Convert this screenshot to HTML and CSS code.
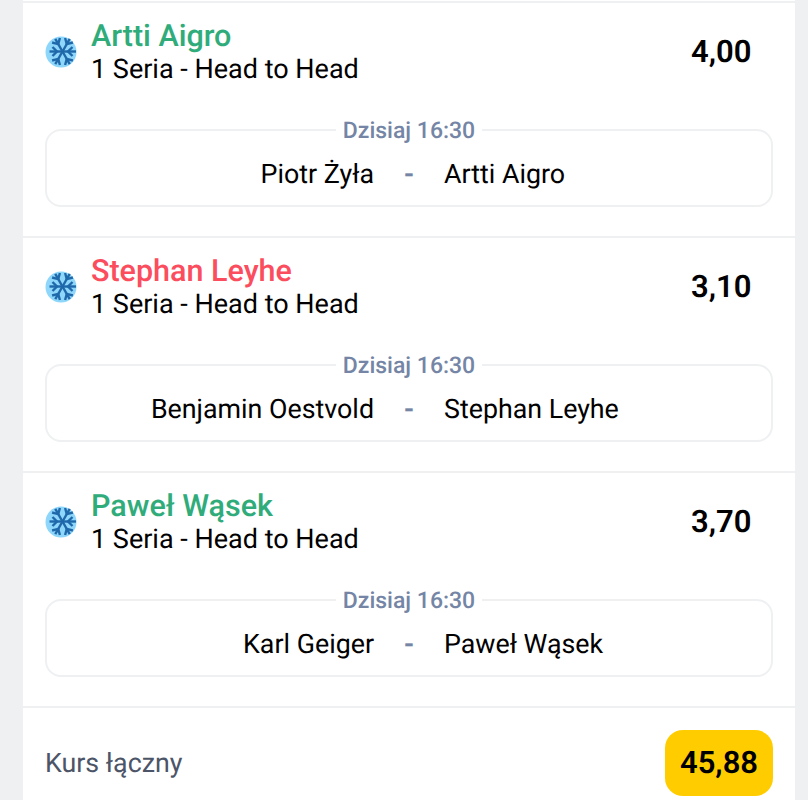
FILE: index.html
```html
<!DOCTYPE html>
<html lang="pl">
<head>
    <meta charset="UTF-8">
    <title>Kupon</title>
    <link rel="stylesheet" href="styles.css">
</head>
<body>
    <svg class="sprite" width="0" height="0">
        <symbol id="snow" viewBox="0 0 32 32">
            <circle cx="16" cy="16" r="15.5" fill="#8fd6fb"/>
            <g fill="none" stroke="#1f69ab" stroke-width="2.4">
                <path d="M4.500 15.500H31"/>
                <path d="M27.500 11l-4.500 4.500 4.500 4.500"/>
                <path d="M7.500 11l4.500 4.500-4.500 4.500"/>
                <g id="arm" transform="rotate(30 17.500 15.500)">
                    <path d="M17.500 15.500V1"/>
                    <path d="M13 2.500l4.500 4.500 4.500-4.500"/>
                </g>
                <use href="#arm" transform="rotate(-60 17.500 15.500)"/>
                <use href="#arm" transform="rotate(120 17.500 15.500)"/>
                <use href="#arm" transform="rotate(180 17.500 15.500)"/>
            </g>
        </symbol>
    </svg>

    <div class="slip">
        <div class="bet">
            <div class="bet-head">
                <svg class="sport-icon"><use href="#snow"/></svg>
                <div class="bet-title">
                    <div class="pick win">Artti Aigro</div>
                    <div class="market">1 Seria - Head to Head</div>
                </div>
                <div class="odds">4,00</div>
            </div>
            <fieldset class="match">
                <legend class="match-time">Dzisiaj 16:30</legend>
                <div class="match-teams">
                    <span class="home">Piotr Żyła</span>
                    <span class="dash">-</span>
                    <span class="away">Artti Aigro</span>
                </div>
            </fieldset>
        </div>

        <div class="bet">
            <div class="bet-head">
                <svg class="sport-icon"><use href="#snow"/></svg>
                <div class="bet-title">
                    <div class="pick lost">Stephan Leyhe</div>
                    <div class="market">1 Seria - Head to Head</div>
                </div>
                <div class="odds">3,10</div>
            </div>
            <fieldset class="match">
                <legend class="match-time">Dzisiaj 16:30</legend>
                <div class="match-teams">
                    <span class="home">Benjamin Oestvold</span>
                    <span class="dash">-</span>
                    <span class="away">Stephan Leyhe</span>
                </div>
            </fieldset>
        </div>

        <div class="bet">
            <div class="bet-head">
                <svg class="sport-icon"><use href="#snow"/></svg>
                <div class="bet-title">
                    <div class="pick win">Paweł Wąsek</div>
                    <div class="market">1 Seria - Head to Head</div>
                </div>
                <div class="odds">3,70</div>
            </div>
            <fieldset class="match">
                <legend class="match-time">Dzisiaj 16:30</legend>
                <div class="match-teams">
                    <span class="home">Karl Geiger</span>
                    <span class="dash">-</span>
                    <span class="away">Paweł Wąsek</span>
                </div>
            </fieldset>
        </div>

        <div class="total">
            <span class="total-label">Kurs łączny</span>
            <span class="total-value">45,88</span>
        </div>
    </div>
</body>
</html>
```

FILE: styles.css
```css
html, body {
    height: 100%;
}

body {
    margin: 0;
    background-color: #eef0f2;
    font-family: Roboto, "Liberation Sans", sans-serif;
    color: #000;
    overflow: hidden;
    text-rendering: geometricPrecision;
}

.sprite {
    display: block;
    height: 0;
}

.slip {
    margin: 0 13px 0 23px;
    padding-top: 1px;
    background-color: #fff;
}

.bet {
    box-sizing: border-box;
    height: 235px;
    padding: 0 22px;
    border-top: 2px solid #eef0f2;
}

.bet-head {
    display: flex;
    align-items: center;
    height: 98px;
    box-sizing: border-box;
}

.sport-icon {
    width: 32px;
    height: 32px;
    margin-right: 14px;
    margin-bottom: 1px;
    flex: none;
}

.bet-title {
    flex: 1;
}

.pick {
    font-size: 30.5px;
    font-weight: 500;
    line-height: 34px;
    padding-top: 1px;
    margin-bottom: -1px;
}

.win {
    color: #2fac7a;
}

.lost {
    color: #fb4d5d;
}

.market {
    font-size: 27px;
    line-height: 32px;
}

.odds {
    font-size: 31px;
    font-weight: 600;
    width: 59px;
    margin-right: 23px;
    padding-bottom: 2px;
}

.match {
    margin: 14px 0 0;
    padding: 0;
    min-width: 0;
    height: 92px;
    box-sizing: border-box;
    border: 2px solid #eef0f2;
    border-radius: 16px;
}

.match-time {
    margin: 0 auto;
    padding: 2px 7px 0;
    font-size: 23px;
    font-weight: 500;
    line-height: 28px;
    color: #7485a5;
}

.match-teams {
    display: grid;
    grid-template-columns: 1fr 70px 1fr;
    align-items: center;
    font-size: 26.8px;
    line-height: 32px;
    margin-top: 13px;
}

.home {
    text-align: right;
}

.dash {
    text-align: center;
    font-weight: 700;
    color: #7485a5;
}

.total {
    display: flex;
    align-items: center;
    justify-content: space-between;
    height: 110px;
    padding: 0 22px;
    border-top: 2px solid #eef0f2;
}

.total-label {
    font-size: 26.8px;
    color: #4c5568;
}

.total-value {
    background-color: #ffcc00;
    border-radius: 18px;
    width: 108px;
    height: 66px;
    line-height: 66px;
    text-align: center;
    font-size: 31px;
    font-weight: 600;
}
```
